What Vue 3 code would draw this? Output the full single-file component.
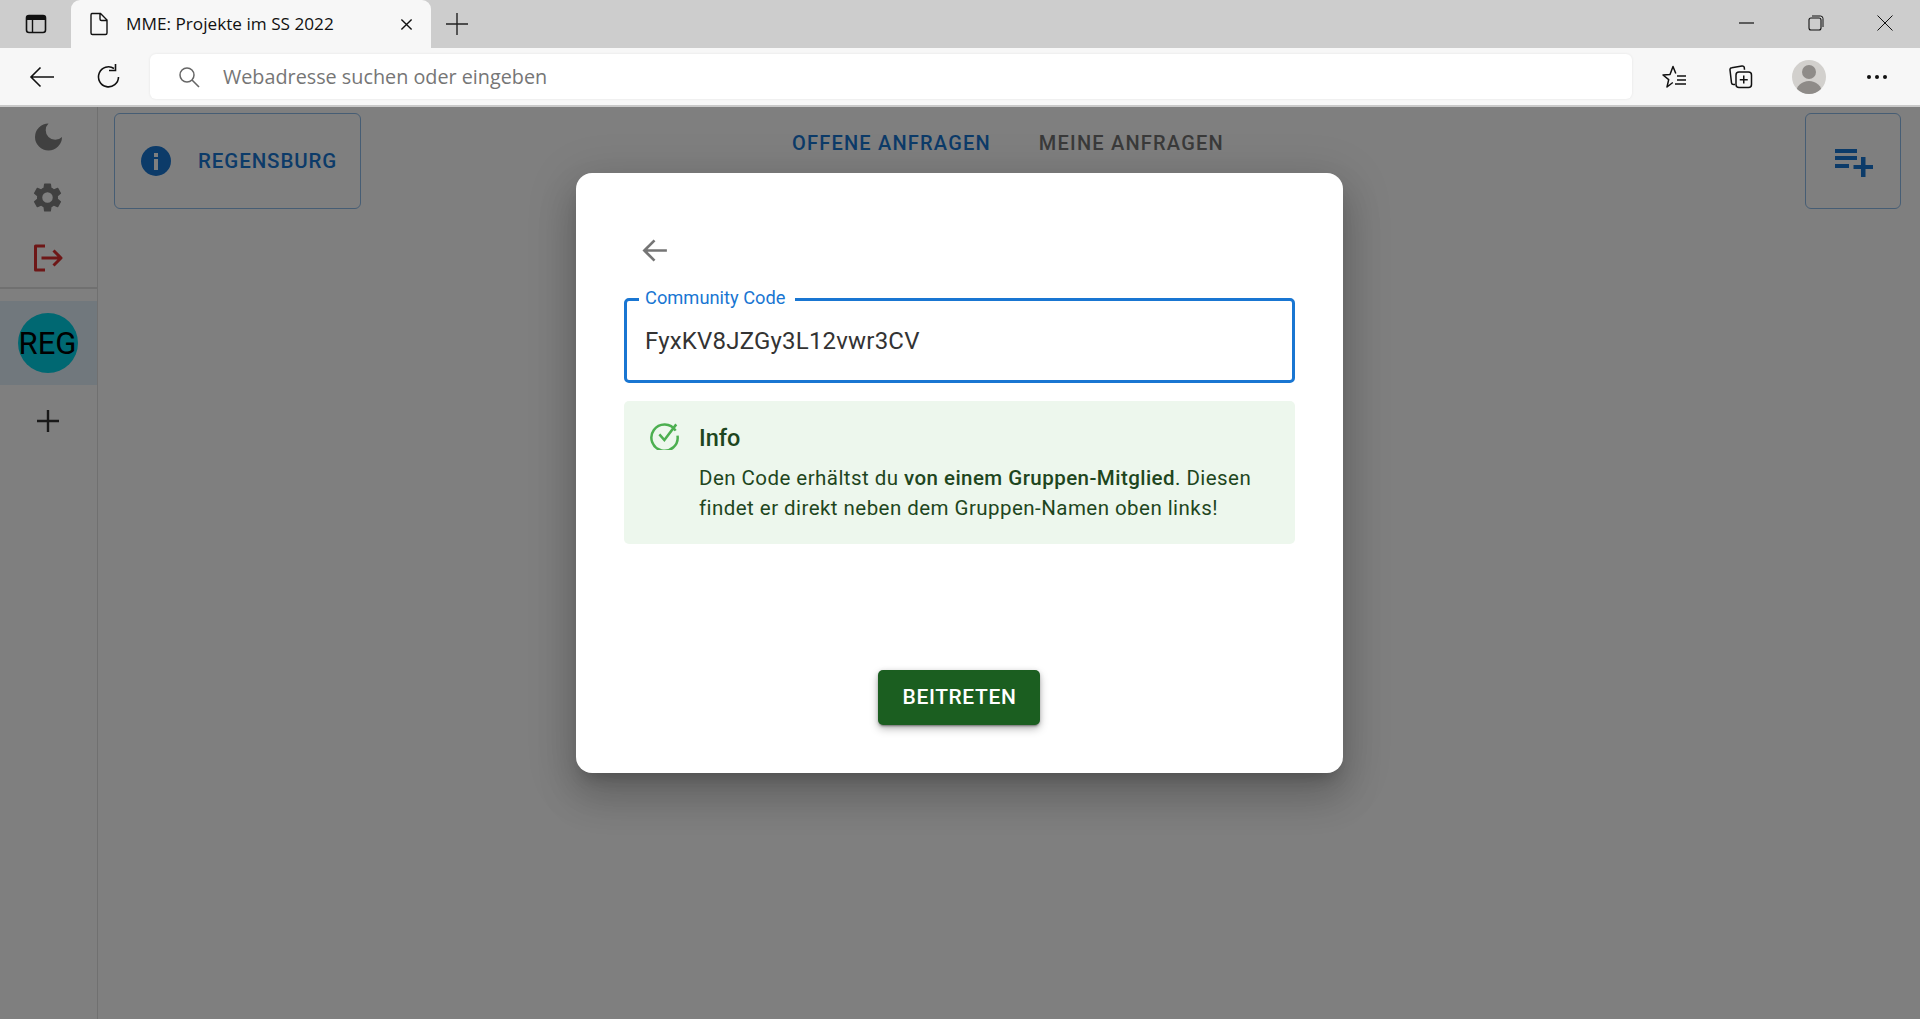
<template>
  <div class="window">
    <!-- tab strip -->
    <div class="tabstrip">
      <div class="tab-actions">
        <svg viewBox="0 0 24 24" class="chrome-icon">
          <rect x="2.5" y="3.5" width="19" height="17" rx="2.5" fill="none" stroke="#111" stroke-width="1.6"/>
          <path d="M3 4h18v4H3z" fill="#111"/>
          <path d="M8.5 8v12" stroke="#111" stroke-width="1.4"/>
        </svg>
      </div>
      <div class="tab">
        <svg viewBox="0 0 20 24" class="tab-doc">
          <path d="M3 1.5h8.5L18 8v13a1.5 1.5 0 0 1-1.5 1.5h-13A1.5 1.5 0 0 1 2 21V3a1.5 1.5 0 0 1 1-1.5zM11 1.5V7a1.5 1.5 0 0 0 1.5 1.5H18" fill="none" stroke="#111" stroke-width="1.4"/>
        </svg>
        <span class="tab-title">MME: Projekte im SS 2022</span>
        <svg viewBox="0 0 14 14" class="tab-close">
          <path d="M1.5 1.5l11 11M12.5 1.5l-11 11" stroke="#111" stroke-width="1.5"/>
        </svg>
      </div>
      <svg viewBox="0 0 22 22" class="new-tab">
        <path d="M11 0v22M0 11h22" stroke="#222" stroke-width="1.4"/>
      </svg>
      <div class="window-controls">
        <svg viewBox="0 0 16 16" class="win-icon"><path d="M0 8h15" stroke="#111" stroke-width="1.2"/></svg>
        <svg viewBox="0 0 16 16" class="win-icon">
          <rect x="1" y="3" width="12" height="12" rx="2" fill="none" stroke="#111" stroke-width="1.1"/>
          <path d="M4 1h8.5A2.5 2.5 0 0 1 15 3.500V12" fill="none" stroke="#111" stroke-width="1"/>
        </svg>
        <svg viewBox="0 0 16 16" class="win-icon"><path d="M.5.5l15 15M15.500.5l-15 15" stroke="#111" stroke-width="1"/></svg>
      </div>
    </div>

    <!-- toolbar -->
    <div class="toolbar">
      <svg viewBox="0 0 26 22" class="tool-back">
        <path d="M25 11H2M11.500 1.500L2 11l9.500 9.500" fill="none" stroke="#111" stroke-width="1.6"/>
      </svg>
      <svg viewBox="0 0 26 26" class="tool-reload">
        <path d="M22.500 13A10 10 0 1 1 18 4.500" fill="none" stroke="#111" stroke-width="1.6"/>
        <path d="M19.500 0v6.500H13" fill="none" stroke="#111" stroke-width="1.6"/>
      </svg>
      <div class="address">
        <svg viewBox="0 0 22 22" class="address-icon">
          <circle cx="9" cy="9" r="7" fill="none" stroke="#666" stroke-width="1.5"/>
          <path d="M14 14l7 7" stroke="#666" stroke-width="1.6"/>
        </svg>
        <span class="address-text">Webadresse suchen oder eingeben</span>
      </div>
      <div class="tool-right">
        <svg viewBox="0 0 26 26" class="tool-icon">
          <path d="M11.800 18.500L6 23l1.700-7.300L2 11l7-.6L12 2.500l2.800 7" fill="none" stroke="#111" stroke-width="1.500" stroke-linejoin="round"/>
          <path d="M16 12h9M16 16h9M14 20h11" stroke="#111" stroke-width="1.300"/>
        </svg>
        <svg viewBox="0 0 26 26" class="tool-icon">
          <path d="M7 20.500H5.500a2 2 0 0 1-2-1.700L2 6a2 2 0 0 1 1.700-2.300L14 2a2 2 0 0 1 2.300 1.700l.2 2" fill="none" stroke="#111" stroke-width="1.500"/>
          <rect x="8" y="8" width="15.500" height="15.500" rx="3" fill="none" stroke="#111" stroke-width="1.500"/>
          <path d="M15.750 11.500v8M11.750 15.750h8" stroke="#111" stroke-width="1.500"/>
        </svg>
        <div class="profile">
          <span class="profile-head"></span>
          <span class="profile-body"></span>
        </div>
        <div class="more"><i></i><i></i><i></i></div>
      </div>
    </div>

    <!-- page -->
    <div class="page">
      <aside class="sidebar">
        <div class="side-actions">
          <svg viewBox="0 0 28 28" class="side-icon">
            <path d="M14.500 0.500A13.500 13.500 0 1 0 28 14a9.500 9.500 0 0 1-13.500-13.500z" fill="#808080"/>
          </svg>
          <svg viewBox="0 0 24 24" class="side-icon gear">
            <path d="M19.140 12.940c.04-.3.060-.61.060-.94 0-.32-.020-.64-.070-.94l2.030-1.580a.49.49 0 0 0 .12-.61l-1.920-3.320a.488.488 0 0 0-.59-.22l-2.390.96c-.5-.38-1.030-.7-1.620-.94l-.36-2.540a.484.484 0 0 0-.48-.41h-3.840c-.24 0-.43.170-.47.410l-.36 2.540c-.59.24-1.130.57-1.620.94l-2.390-.96c-.22-.080-.47 0-.59.220L2.740 8.870c-.12.210-.080.470.12.610l2.030 1.580c-.05.3-.09.630-.09.940s.02.640.07.940l-2.030 1.580a.49.49 0 0 0-.12.610l1.920 3.320c.12.220.37.290.59.220l2.390-.96c.5.380 1.030.7 1.620.94l.36 2.540c.05.240.24.410.48.410h3.840c.24 0 .44-.170.47-.410l.36-2.540c.59-.24 1.130-.56 1.620-.94l2.390.96c.22.080.47 0 .59-.220l1.920-3.320c.12-.22.070-.47-.12-.61l-2.010-1.580zM12 15.600A3.600 3.600 0 1 1 12 8.400a3.600 3.600 0 0 1 0 7.200z" fill="#808080"/>
          </svg>
          <svg viewBox="0 0 30 28" class="side-icon logout">
            <path d="M12 2H2.500v24H12M8.500 14H28M20.500 6.500L28 14l-7.500 7.500" fill="none" stroke="#dc2f2f" stroke-width="3" stroke-linejoin="round"/>
          </svg>
        </div>
        <div class="side-divider"></div>
        <div class="community active">
          <div class="avatar">REG</div>
        </div>
        <svg viewBox="0 0 22 22" class="side-add">
          <path d="M11 0v22M0 11h22" stroke="#333" stroke-width="2.400"/>
        </svg>
      </aside>

      <main class="content">
        <button class="outline-btn group-btn">
          <svg viewBox="0 0 30 30" class="info-dot">
            <circle cx="15" cy="15" r="15" fill="#1976d2"/>
            <path d="M13 13h4v11h-4zM13 7h4v4h-4z" fill="#fff"/>
          </svg>
          <span>REGENSBURG</span>
        </button>
        <nav class="tabs">
          <span class="nav-tab selected">OFFENE ANFRAGEN</span>
          <span class="nav-tab">MEINE ANFRAGEN</span>
        </nav>
        <button class="outline-btn add-btn">
          <svg viewBox="0 0 38 28" class="playlist-add">
            <path d="M0 0h22v4H0zM0 7h22v4H0zM0 15h14v4H0zM26 8h4.500v8H38v4h-7.500v8H26v-8h-7.500v-4H26z" fill="#1976d2"/>
          </svg>
        </button>
      </main>

      <div class="scrim">
        <div class="dialog">
          <svg viewBox="0 0 24 24" class="dialog-back">
            <path d="M23 12H3M12 3l-9 9 9 9" fill="none" stroke="#757575" stroke-width="2.400"/>
          </svg>
          <div class="field">
            <label class="field-label">Community Code</label>
            <span class="field-value">FyxKV8JZGy3L12vwr3CV</span>
          </div>
          <div class="alert">
            <svg viewBox="0 0 24 24" class="alert-icon">
              <path d="M20.500 8.500A10.500 10.500 0 1 0 22 12.500M7.500 11.500l4 4.500L21 3.500" fill="none" stroke="#4caf50" stroke-width="2"/>
            </svg>
            <div class="alert-body">
              <div class="alert-title">Info</div>
              <div class="alert-text">
                Den Code erhältst du <strong>von einem Gruppen-Mitglied</strong>. Diesen findet er direkt neben dem Gruppen-Namen oben links!
              </div>
            </div>
          </div>
          <button class="join-btn">BEITRETEN</button>
        </div>
      </div>
    </div>
  </div>
</template>

<script setup>
</script>

<style>
html, body {
  margin: 0;
  height: 100%;
  overflow: hidden;
}
</style>

<style scoped>
.window {
  width: 1920px;
  height: 1019px;
  display: flex;
  flex-direction: column;
  overflow: hidden;
  font-family: Roboto, "Noto Sans", sans-serif;
}

.tabstrip {
  height: 48px;
  background: #cdcdcd;
  display: flex;
  align-items: stretch;
  flex-shrink: 0;
}
.tab-actions {
  width: 71px;
  display: flex;
  align-items: center;
  justify-content: center;
}
.chrome-icon {
  width: 24px;
  height: 24px;
}
.tab {
  width: 360px;
  background: #f7f7f7;
  border-radius: 9px 9px 0 0;
  display: flex;
  align-items: center;
  box-sizing: border-box;
  padding: 0 18px 0 18px;
}
.tab-doc {
  width: 20px;
  height: 24px;
  flex-shrink: 0;
}
.tab-title {
  margin: -2px 0 0 17px;
  font-family: "Open Sans", sans-serif;
  font-size: 17.200px;
  color: #111;
  white-space: nowrap;
  flex: 1;
}
.tab-close {
  width: 13px;
  height: 13px;
}
.new-tab {
  width: 22px;
  height: 22px;
  align-self: center;
  margin-left: 15px;
}
.window-controls {
  margin-left: auto;
  display: flex;
  align-items: center;
  gap: 53px;
  padding-right: 27px;
  padding-bottom: 2px;
}
.win-icon {
  width: 16px;
  height: 16px;
}

.toolbar {
  height: 57px;
  background: #f7f7f7;
  border-bottom: 2px solid #c9c9c9;
  box-sizing: content-box;
  display: flex;
  align-items: center;
  flex-shrink: 0;
}
.tool-back {
  width: 26px;
  height: 22px;
  margin-left: 29px;
}
.tool-reload {
  width: 26px;
  height: 26px;
  margin-left: 41px;
}
.address {
  width: 1482px;
  height: 45px;
  margin-left: 28px;
  background: #fff;
  border-radius: 6px;
  box-shadow: 0 0 3px rgba(0, 0, 0, 0.08);
  display: flex;
  align-items: center;
}
.address-icon {
  width: 22px;
  height: 22px;
  margin-left: 28px;
}
.address-text {
  margin-left: 23px;
  font-family: "Open Sans", sans-serif;
  font-size: 19.800px;
  color: #767676;
}
.tool-right {
  flex: 1;
  display: flex;
  align-items: center;
  padding-left: 29px;
  gap: 41px;
}
.tool-icon {
  width: 26px;
  height: 26px;
}
.profile {
  width: 34px;
  height: 34px;
  margin-left: -3px;
  border-radius: 50%;
  background: #d2d0cd;
  position: relative;
  overflow: hidden;
}
.profile-head {
  position: absolute;
  left: 10px;
  top: 5px;
  width: 14px;
  height: 14px;
  border-radius: 50%;
  background: #8e8b88;
}
.profile-body {
  position: absolute;
  left: 4px;
  top: 21px;
  width: 26px;
  height: 24px;
  border-radius: 50%;
  background: #8e8b88;
}
.more {
  display: flex;
  gap: 4px;
}
.more i {
  width: 4px;
  height: 4px;
  border-radius: 50%;
  background: #111;
}

.page {
  flex: 1;
  position: relative;
  display: flex;
  background: #fff;
  min-height: 0;
}
.sidebar {
  width: 97px;
  box-sizing: content-box;
  border-right: 1px solid #e0e0e0;
  display: flex;
  flex-direction: column;
  align-items: center;
  flex-shrink: 0;
  padding-top: 16px;
}
.side-actions {
  display: flex;
  flex-direction: column;
  align-items: center;
  gap: 32px;
  margin-right: 2px;
}
.side-icon {
  width: 28px;
  height: 28px;
  display: block;
}
.gear {
  width: 35px;
  height: 35px;
  margin: -3px 0;
}
.logout {
  width: 30px;
}
.side-divider {
  align-self: stretch;
  height: 2px;
  background: #e0e0e0;
  margin-top: 15px;
}
.community {
  align-self: stretch;
  height: 84px;
  margin-top: 12px;
  padding-right: 2px;
  display: flex;
  align-items: center;
  justify-content: center;
}
.community.active {
  background: #e3f0fa;
}
.avatar {
  width: 60px;
  height: 60px;
  border-radius: 50%;
  background: #00d0e4;
  color: #000;
  font-size: 31px;
  display: flex;
  align-items: center;
  justify-content: center;
}
.side-add {
  width: 22px;
  height: 22px;
  margin-top: 25px;
  margin-right: 2px;
}

.content {
  flex: 1;
  display: flex;
  align-items: flex-start;
  padding: 6px 19px 0 16px;
  position: relative;
}
.outline-btn {
  height: 96px;
  background: none;
  border: 1px solid #8cbae8;
  border-radius: 6px;
  display: flex;
  align-items: center;
  font-family: inherit;
  color: #1976d2;
  padding: 0;
}
.group-btn {
  width: 247px;
  padding-left: 26px;
  font-size: 20.500px;
  font-weight: 500;
  letter-spacing: 0.9px;
}
.info-dot {
  width: 30px;
  height: 30px;
  margin-right: 27px;
}
.add-btn {
  width: 96px;
  margin-left: auto;
  justify-content: center;
}
.playlist-add {
  width: 38px;
  height: 28px;
  margin: 4px 0 0 2px;
}
.tabs {
  display: flex;
  gap: 48px;
  margin-top: 18px;
  margin-left: 431px;
}
.nav-tab {
  font-size: 20px;
  font-weight: 500;
  letter-spacing: 1.200px;
  color: #757575;
}
.nav-tab.selected {
  color: #1976d2;
}

.scrim {
  position: absolute;
  inset: 0;
  background: rgba(0, 0, 0, 0.5);
}
.dialog {
  position: absolute;
  left: 576px;
  top: 66px;
  width: 767px;
  height: 600px;
  box-sizing: border-box;
  padding: 0 48px;
  background: #fff;
  border-radius: 16px;
  box-shadow: 0 11px 15px -7px rgba(0, 0, 0, 0.2), 0 24px 38px 3px rgba(0, 0, 0, 0.14), 0 9px 46px 8px rgba(0, 0, 0, 0.12);
  display: flex;
  flex-direction: column;
}
.dialog-back {
  width: 27px;
  height: 27px;
  margin: 64px 0 0 17px;
  flex-shrink: 0;
}
.field {
  margin-top: 34px;
  height: 85px;
  box-sizing: border-box;
  border: 3px solid #1976d2;
  border-radius: 5px;
  position: relative;
  display: flex;
  align-items: center;
  padding-left: 18px;
  flex-shrink: 0;
}
.field-label {
  position: absolute;
  top: -13px;
  left: 12px;
  background: #fff;
  padding: 0 9px 0 6px;
  font-size: 18.300px;
  line-height: 20px;
  color: #1976d2;
}
.field-value {
  font-size: 24px;
  letter-spacing: 0.2px;
  margin-top: 1px;
  color: #333;
}
.alert {
  margin-top: 18px;
  height: 143px;
  box-sizing: border-box;
  background: #edf7ed;
  border-radius: 5px;
  display: flex;
  padding: 22px 24px 0 26px;
  color: #1e4620;
  flex-shrink: 0;
}
.alert-icon {
  width: 30px;
  height: 30px;
  flex-shrink: 0;
  margin: -3px 19px 0 0;
}
.alert-title {
  font-size: 23.500px;
  font-weight: 500;
  line-height: 30px;
}
.alert-text {
  margin-top: 10px;
  font-size: 20.500px;
  line-height: 30px;
  letter-spacing: 0.45px;
}
.alert-text strong {
  font-weight: 500;
}
.join-btn {
  align-self: center;
  margin-top: 126px;
  margin-right: 2px;
  width: 162px;
  height: 55px;
  border: none;
  border-radius: 5px;
  background: #1b5e20;
  color: #fff;
  font-family: inherit;
  font-size: 21px;
  font-weight: 500;
  letter-spacing: 0.6px;
  padding: 0 0 2px 2px;
  box-shadow: 0 3px 1px -2px rgba(0, 0, 0, 0.2), 0 2px 2px 0 rgba(0, 0, 0, 0.14), 0 1px 5px 0 rgba(0, 0, 0, 0.12), 0 4px 8px rgba(0, 0, 0, 0.25);
}
</style>
